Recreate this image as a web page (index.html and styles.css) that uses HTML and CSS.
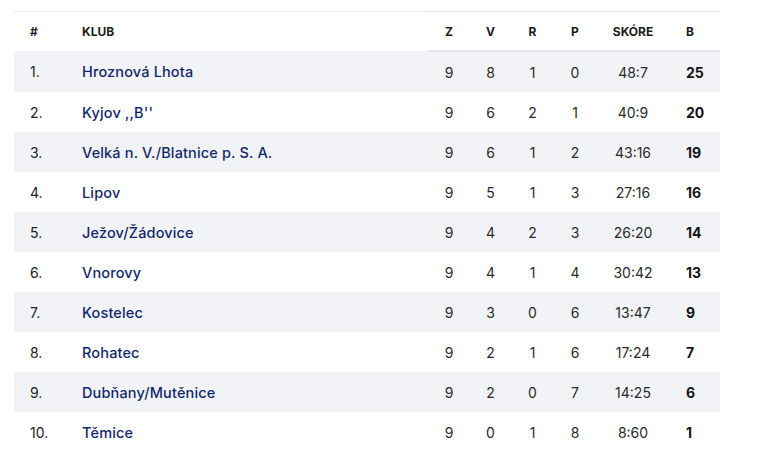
FILE: index.html
```html
<!DOCTYPE html>
<html lang="cs">
<head>
<meta charset="utf-8">
<link rel="stylesheet" href="styles.css">
</head>
<body>
<div class="wrap">
<table class="standings">
  <colgroup>
    <col class="c-pos"><col class="c-club"><col class="c-n"><col class="c-n2"><col class="c-n3"><col class="c-n"><col class="c-score"><col class="c-pts">
  </colgroup>
  <thead>
    <tr>
      <th class="pos">#</th><th class="club">KLUB</th>
      <th class="num">Z</th><th class="num">V</th><th class="num">R</th><th class="num">P</th>
      <th class="num">SKÓRE</th><th class="pts">B</th>
    </tr>
  </thead>
  <tbody>
    <tr><td class="pos">1.</td><td class="club">Hroznová Lhota</td><td class="num">9</td><td class="num">8</td><td class="num">1</td><td class="num">0</td><td class="num">48:7</td><td class="pts">25</td></tr>
    <tr><td class="pos">2.</td><td class="club">Kyjov ,,B''</td><td class="num">9</td><td class="num">6</td><td class="num">2</td><td class="num">1</td><td class="num">40:9</td><td class="pts">20</td></tr>
    <tr><td class="pos">3.</td><td class="club">Velká n. V./Blatnice p. S. A.</td><td class="num">9</td><td class="num">6</td><td class="num">1</td><td class="num">2</td><td class="num">43:16</td><td class="pts">19</td></tr>
    <tr><td class="pos">4.</td><td class="club">Lipov</td><td class="num">9</td><td class="num">5</td><td class="num">1</td><td class="num">3</td><td class="num">27:16</td><td class="pts">16</td></tr>
    <tr><td class="pos">5.</td><td class="club">Ježov/Žádovice</td><td class="num">9</td><td class="num">4</td><td class="num">2</td><td class="num">3</td><td class="num">26:20</td><td class="pts">14</td></tr>
    <tr><td class="pos">6.</td><td class="club">Vnorovy</td><td class="num">9</td><td class="num">4</td><td class="num">1</td><td class="num">4</td><td class="num">30:42</td><td class="pts">13</td></tr>
    <tr><td class="pos">7.</td><td class="club">Kostelec</td><td class="num">9</td><td class="num">3</td><td class="num">0</td><td class="num">6</td><td class="num">13:47</td><td class="pts">9</td></tr>
    <tr><td class="pos">8.</td><td class="club">Rohatec</td><td class="num">9</td><td class="num">2</td><td class="num">1</td><td class="num">6</td><td class="num">17:24</td><td class="pts">7</td></tr>
    <tr><td class="pos">9.</td><td class="club">Dubňany/Mutěnice</td><td class="num">9</td><td class="num">2</td><td class="num">0</td><td class="num">7</td><td class="num">14:25</td><td class="pts">6</td></tr>
    <tr><td class="pos">10.</td><td class="club">Těmice</td><td class="num">9</td><td class="num">0</td><td class="num">1</td><td class="num">8</td><td class="num">8:60</td><td class="pts">1</td></tr>
  </tbody>
</table>
</div>
</body>
</html>
```
FILE: styles.css
```css
html, body {
  margin: 0;
  padding: 0;
  background: #ffffff;
}
body {
  font-family: Inter, "Noto Sans", "DejaVu Sans", sans-serif;
  color: #222222;
}
.wrap {
  padding: 11px 0 0 14px;
}
.standings {
  width: 706px;
  border-collapse: collapse;
  table-layout: fixed;
  border-top: 1px solid #e9eaee;
}
.c-pos { width: 52px; }
.c-club { width: 362px; }
.c-n { width: 42px; }
.c-n2 { width: 41px; }
.c-n3 { width: 43px; }
.c-score { width: 74px; }
.c-pts { width: 50px; }

th {
  height: 38px;
  font-size: 12px;
  font-weight: 700;
  color: #1c1c1c;
  text-transform: uppercase;
  padding: 0;
  vertical-align: middle;
}
th.num, th.pts {
  border-top: 1px solid #e3e5ea;
  border-bottom: 2px solid #e3e5ea;
}
td {
  height: 40px;
  padding: 0;
  font-size: 14px;
  vertical-align: middle;
}
tbody tr:nth-child(odd) {
  background: #f2f3f7;
}
.pos {
  text-align: left;
  padding-left: 16px;
}
td.pos { color: #222; }
.club {
  text-align: left;
  padding-left: 16px;
}
td.club {
  color: #12286c;
  font-size: 14.5px;
  font-weight: 500;
  letter-spacing: 0.15px;
}
.num {
  text-align: center;
}
td.num { color: #2a2a2a; }
.pts {
  text-align: left;
  padding-left: 16px;
}
td.pts {
  font-weight: 700;
  color: #141414;
}
```
